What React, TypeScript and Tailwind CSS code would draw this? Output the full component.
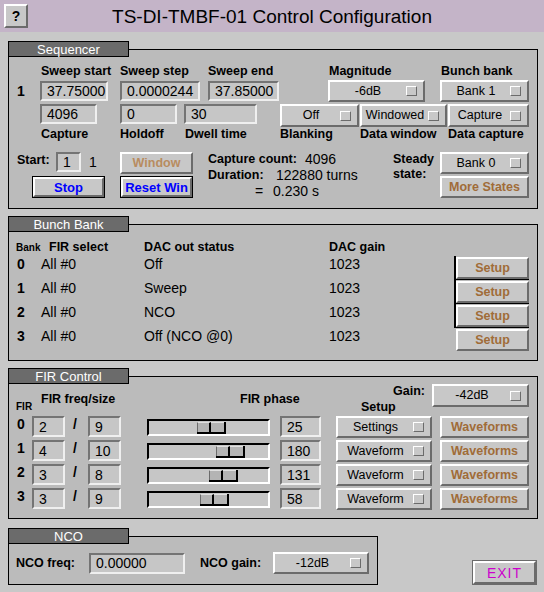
const raised =
  "border-2 border-t-white border-l-white border-b-[#6b6b6b] border-r-[#6b6b6b] bg-[#c8c8c8]";
const sunken =
  "border-2 border-t-[#747474] border-l-[#747474] border-b-[#efefef] border-r-[#efefef] bg-[#c6c6c6]";

function Panel({
  title,
  className,
  bodyClass,
  children,
}: {
  title: string;
  className: string;
  bodyClass: string;
  children: React.ReactNode;
}) {
  return (
    <div className={className}>
      <div className="relative z-10 flex h-[16px] w-[121px] items-center justify-center border border-black bg-[#6b6b6b] text-[13px] leading-none text-white">
        {title}
      </div>
      <div className={`-mt-[8px] border border-black bg-[#bbbbbb] ${bodyClass}`}>{children}</div>
    </div>
  );
}

function Field({ value, className }: { value: string; className: string }) {
  return (
    <div className={`flex items-center pl-[5px] text-[14px] leading-none ${sunken} ${className}`}>
      {value}
    </div>
  );
}

function Menu({ label, className }: { label: string; className: string }) {
  return (
    <div className={`flex items-center font-normal ${raised} ${className}`}>
      <span className="flex-1 whitespace-nowrap text-center text-[12.5px] leading-none">{label}</span>
      <span className="mr-[6px] h-[10px] w-[11px] border border-t-white border-l-white border-b-[#6b6b6b] border-r-[#6b6b6b]" />
    </div>
  );
}

function MsgButton({ label, className, dim }: { label: string; className: string; dim?: boolean }) {
  return (
    <div
      className={`flex items-center justify-center whitespace-nowrap text-[12.5px] font-bold leading-none ${raised} ${
        dim ? "text-[#b88c60]" : "text-[#a06c38]"
      } ${className}`}
    >
      {label}
    </div>
  );
}

function BlueButton({ label, className }: { label: string; className: string }) {
  return (
    <div className={`border border-black ${className}`}>
      <div
        className={`flex h-full items-center justify-center text-[13px] font-bold leading-none text-[#0000ff] ${raised}`}
      >
        {label}
      </div>
    </div>
  );
}

function Slider({ pos }: { pos: string }) {
  return (
    <div className="ml-[26px] mt-[3px] flex h-[17px] w-[123px] items-end border-2 border-t-black border-l-black border-b-white border-r-white bg-[#c6c6c6]">
      <div className={`flex h-[12px] w-[29px] border-r-2 border-b-2 border-black bg-[#b4b4b4] ${pos}`}>
        <div className="h-full w-[14px] border-t border-l border-r-2 border-t-[#e0e0e0] border-l-[#6b6b6b] border-r-black" />
        <div className="h-full flex-1 border-t border-t-[#e0e0e0]" />
      </div>
    </div>
  );
}

const label = "text-[12.5px] font-bold leading-[14px] whitespace-nowrap";

const banks = [
  { n: "0", status: "Off", edge: true },
  { n: "1", status: "Sweep", edge: true },
  { n: "2", status: "NCO", edge: true },
  { n: "3", status: "Off (NCO @0)", edge: false },
];

const firs = [
  { n: "0", f: "2", s: "9", pos: "ml-[48px]", p: "25", m: "Settings" },
  { n: "1", f: "4", s: "10", pos: "ml-[67px]", p: "180", m: "Waveform" },
  { n: "2", f: "3", s: "8", pos: "ml-[60px]", p: "131", m: "Waveform" },
  { n: "3", f: "3", s: "9", pos: "ml-[51px]", p: "58", m: "Waveform" },
];

export default function App() {
  return (
    <div className="h-[592px] w-[544px] overflow-hidden bg-[#c8c8c8] font-['Liberation_Sans',Arial,sans-serif] text-black">
      {/* title bar */}
      <div className="flex h-[32px] items-center bg-[#c4b4c8] px-[4px]">
        <div className={`flex h-[24px] w-[24px] items-center justify-center text-[14px] font-bold ${raised}`}>?</div>
        <div className="flex-1 text-center text-[19px] leading-none">TS-DI-TMBF-01 Control Configuration</div>
        <div className="w-[24px]" />
      </div>

      {/* Sequencer */}
      <Panel title="Sequencer" className="ml-[8px] mt-[9px] w-[530px]" bodyClass="h-[160px]">
        <div className="flex flex-col pt-[14px]">
          <div className={`flex h-[14px] items-center ${label}`}>
            <span className="ml-[32px] w-[79px]">Sweep start</span>
            <span className="w-[88px]">Sweep step</span>
            <span className="w-[121px]">Sweep end</span>
            <span className="w-[112px]">Magnitude</span>
            <span>Bunch bank</span>
          </div>
          <div className="mt-[2px] flex h-[22px] items-center">
            <span className="ml-[8px] w-[23px] text-[14px] font-bold">1</span>
            <Field value="37.75000" className="h-[20px] w-[68px]" />
            <Field value="0.0000244" className="ml-[12px] h-[20px] w-[80px]" />
            <Field value="37.85000" className="ml-[8px] h-[20px] w-[71px]" />
            <Menu label="-6dB" className="ml-[49px] h-[22px] w-[97px]" />
            <Menu label="Bank 1" className="ml-[15px] h-[22px] w-[89px]" />
          </div>
          <div className="mt-[2px] flex h-[23px] items-start">
            <Field value="4096" className="ml-[31px] h-[20px] w-[57px]" />
            <Field value="0" className="ml-[23px] h-[20px] w-[57px]" />
            <Field value="30" className="ml-[7px] h-[20px] w-[73px]" />
            <Menu label="Off" className="ml-[23px] h-[23px] w-[79px]" />
            <Menu label="Windowed" className="ml-[1px] h-[23px] w-[87px]" />
            <Menu label="Capture" className="ml-[1px] h-[23px] w-[81px]" />
          </div>
          <div className={`flex h-[14px] items-center ${label}`}>
            <span className="ml-[32px] w-[79px]">Capture</span>
            <span className="w-[65px]">Holdoff</span>
            <span className="w-[95px]">Dwell time</span>
            <span className="w-[80px]">Blanking</span>
            <span className="w-[88px]">Data window</span>
            <span>Data capture</span>
          </div>
          <div className="mt-[11px] flex items-start">
            <div className="flex w-[111px] flex-col">
              <div className="flex h-[20px] items-start">
                <span className={`ml-[8px] mt-[1px] w-[39px] ${label}`}>Start:</span>
                <Field value="1" className="h-[20px] w-[25px]" />
                <span className="ml-[8px] mt-[2px] text-[14px] leading-[16px]">1</span>
              </div>
              <BlueButton label="Stop" className="ml-[23px] mt-[4px] h-[22px] w-[73px]" />
            </div>
            <div className="flex w-[73px] flex-col gap-[2px]">
              <MsgButton label="Window" dim className="h-[22px]" />
              <BlueButton label="Reset Win" className="h-[22px]" />
            </div>
            <div className="ml-[15px] -mt-[1px] flex w-[185px] flex-col text-[14px] leading-[16px]">
              <div className="flex">
                <span className={`w-[97px] ${label} leading-[16px]`}>Capture count:</span>
                <span>4096</span>
              </div>
              <div className="flex">
                <span className={`w-[68px] ${label} leading-[16px]`}>Duration:</span>
                <span>122880 turns</span>
              </div>
              <div className="flex">
                <span className="ml-[47px] w-[18px]">=</span>
                <span>0.230 s</span>
              </div>
            </div>
            <div className="flex w-[47px] flex-col text-[12.5px] font-bold leading-[15px]">
              <span>Steady</span>
              <span>state:</span>
            </div>
            <div className="flex w-[89px] flex-col gap-[2px]">
              <Menu label="Bank 0" className="h-[22px]" />
              <MsgButton label="More States" className="h-[22px]" />
            </div>
          </div>
        </div>
      </Panel>

      {/* Bunch Bank */}
      <Panel title="Bunch Bank" className="ml-[8px] mt-[7px] w-[530px]" bodyClass="h-[137px]">
        <div className="flex flex-col pt-[15px]">
          <div className="flex h-[14px] items-baseline font-bold leading-[14px]">
            <span className="ml-[7px] w-[33px] text-[10px]">Bank</span>
            <span className="w-[95px] text-[12.5px]">FIR select</span>
            <span className="w-[185px] text-[12.5px]">DAC out status</span>
            <span className="text-[12.5px]">DAC gain</span>
          </div>
          <div className="mt-[2px] flex flex-col">
            {banks.map((b) => (
              <div key={b.n} className="flex h-[24px] items-start text-[14px] leading-[16px]">
                <span className="ml-[8px] w-[24px] font-bold">{b.n}</span>
                <span className="w-[103px]">All #0</span>
                <span className="w-[185px]">{b.status}</span>
                <span className="w-[125px]">1023</span>
                <div
                  className={
                    b.edge
                      ? "h-[24px] w-[75px] border-l-2 border-b border-black"
                      : "h-[24px] w-[75px] pl-[2px]"
                  }
                >
                  <MsgButton label="Setup" className="mt-[1px] h-[22px] w-[73px]" />
                </div>
              </div>
            ))}
          </div>
        </div>
      </Panel>

      {/* FIR Control */}
      <Panel title="FIR Control" className="ml-[8px] mt-[7px] w-[530px]" bodyClass="h-[143px]">
        <div className="flex h-[39px] items-start font-bold">
          <span className="ml-[7px] mt-[24px] w-[25px] text-[10px] leading-[12px]">FIR</span>
          <span className={`mt-[15px] w-[199px] ${label}`}>FIR freq/size</span>
          <span className={`mt-[15px] w-[121px] ${label}`}>FIR phase</span>
          <span className={`mt-[23px] w-[32px] ${label}`}>Setup</span>
          <span className={`mt-[7px] w-[39px] ${label}`}>Gain:</span>
          <Menu label="-42dB" className="mt-[7px] h-[23px] w-[97px]" />
        </div>
        {firs.map((r) => (
          <div key={r.n} className="flex h-[24px] items-start">
            <span className="ml-[8px] w-[15px] text-[14px] font-bold leading-[16px]">{r.n}</span>
            <Field value={r.f} className="h-[21px] w-[33px]" />
            <span className="ml-[8px] w-[15px] text-[14px] font-bold leading-[16px]">/</span>
            <Field value={r.s} className="h-[21px] w-[33px]" />
            <Slider pos={r.pos} />
            <Field value={r.p} className="ml-[10px] h-[21px] w-[41px]" />
            <Menu label={r.m} className="ml-[15px] h-[22px] w-[96px]" />
            <MsgButton label="Waveforms" className="ml-[8px] h-[22px] w-[89px]" />
          </div>
        ))}
      </Panel>

      {/* NCO + exit */}
      <div className="mt-[9px] flex items-start">
        <Panel title="NCO" className="ml-[8px] w-[370px]" bodyClass="h-[49px]">
          <div className="flex h-[22px] items-center mt-[15px]">
            <span className={`ml-[7px] w-[73px] ${label}`}>NCO freq:</span>
            <Field value="0.00000" className="h-[21px] w-[96px]" />
            <span className={`ml-[15px] w-[73px] ${label}`}>NCO gain:</span>
            <Menu label="-12dB" className="h-[22px] w-[96px]" />
          </div>
        </Panel>
        <div className="ml-[94px] mt-[32px] h-[25px] w-[65px] border border-[#6b6b6b]">
          <div
            className={`flex h-full items-center justify-center text-[14px] leading-none tracking-[1px] text-[#cc00cc] ${raised}`}
          >
            EXIT
          </div>
        </div>
      </div>
    </div>
  );
}
